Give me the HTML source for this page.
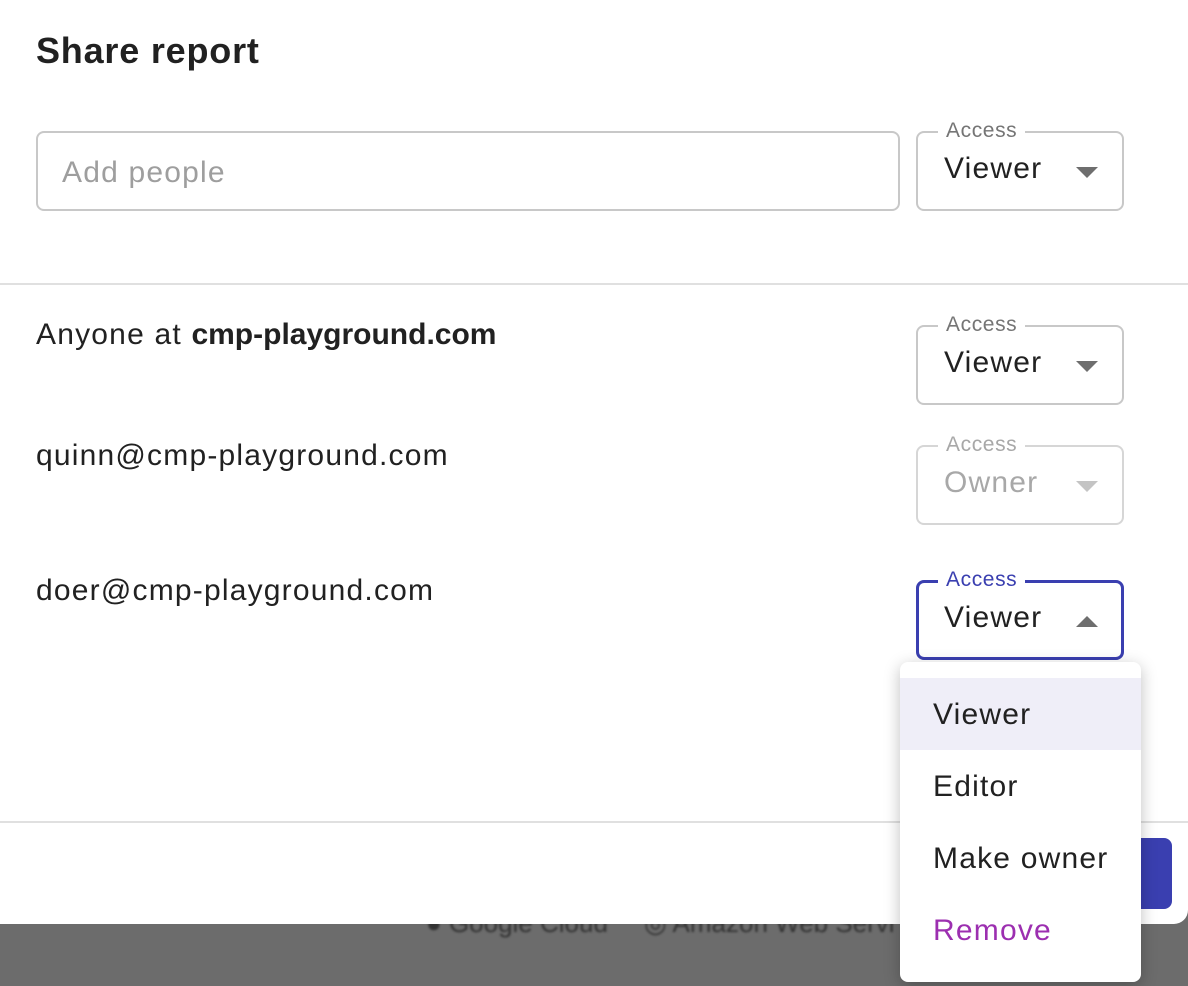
<!DOCTYPE html>
<html><head><style>
body{margin:0;width:1188px;height:986px;background:#6c6c6c;font-family:"Liberation Sans",sans-serif;position:relative;overflow:hidden;color:#212121}
.dlg{position:absolute;left:0;top:0;width:1188px;height:924px;background:#fff;border-radius:0 0 14px 0}
.abs{position:absolute}
.field{position:absolute;border:2px solid #c8c8c8;border-radius:8px;box-sizing:border-box}
.sel{left:916px;width:208px;height:80px}
.lab{position:absolute;left:20px;top:-14px;background:#fff;padding:0 8px;font-size:21px;color:#757575;letter-spacing:.6px}
.val{position:absolute;left:26px;top:19px;font-size:30px;color:#212121;letter-spacing:1.2px}
.arr{position:absolute;left:158px;top:34px;width:0;height:0;border-left:11px solid transparent;border-right:11px solid transparent;border-top:11px solid #6e6e6e}
.t{font-size:30px;letter-spacing:1.2px}
</style></head><body>
<div class="abs" style="left:426px;top:908px;font-size:26px;color:#333;filter:blur(1px)">● Google Cloud &nbsp;&nbsp;&nbsp; ◎ Amazon Web Servi</div>
<div class="dlg">
<div class="abs" style="left:36px;top:30px;font-size:36px;font-weight:bold;letter-spacing:.8px">Share report</div>
<div class="field" style="left:36px;top:131px;width:864px;height:80px"><div class="abs" style="left:24px;top:23px;font-size:30px;color:#9e9e9e;letter-spacing:1.2px">Add people</div></div>
<div class="field sel" style="top:131px"><div class="lab">Access</div><div class="val">Viewer</div><div class="arr"></div></div>
<div class="abs" style="left:0;top:283px;width:1188px;height:2px;background:#e0e0e0"></div>
<div class="abs t" style="left:36px;top:318px">Anyone at <b style="letter-spacing:0">cmp-playground.com</b></div>
<div class="field sel" style="top:325px"><div class="lab">Access</div><div class="val">Viewer</div><div class="arr"></div></div>
<div class="abs t" style="left:36px;top:439px">quinn@cmp-playground.com</div>
<div class="field sel" style="top:445px;border-color:#d6d6d6"><div class="lab" style="color:#a8a8a8">Access</div><div class="val" style="color:#a8a8a8">Owner</div><div class="arr" style="border-top-color:#c4c4c4"></div></div>
<div class="abs t" style="left:36px;top:574px">doer@cmp-playground.com</div>
<div class="field sel" style="top:580px;border:3px solid #3a3fb0"><div class="lab" style="color:#3a3fb0;top:-15px;left:19px">Access</div><div class="val" style="left:25px;top:18px">Viewer</div><div class="arr" style="left:157px;top:33px;border-top:0;border-bottom:11px solid #6e6e6e"></div></div>
<div class="abs" style="left:0;top:821px;width:1188px;height:2px;background:#e0e0e0"></div>
<div class="abs" style="left:1120px;top:838px;width:52px;height:71px;background:#3a3fb0;border-radius:8px"></div>
</div>
<div class="abs" style="left:900px;top:662px;width:241px;height:320px;background:#fff;border-radius:8px;box-shadow:0 4px 16px rgba(0,0,0,.25)">
<div class="abs" style="left:0;top:16px;width:241px;height:72px;background:#efeef8"></div>
<div class="abs t" style="left:33px;top:36px">Viewer</div>
<div class="abs t" style="left:33px;top:108px">Editor</div>
<div class="abs t" style="left:33px;top:180px">Make owner</div>
<div class="abs t" style="left:33px;top:252px;color:#9c2fb0">Remove</div>
</div>
</body></html>
